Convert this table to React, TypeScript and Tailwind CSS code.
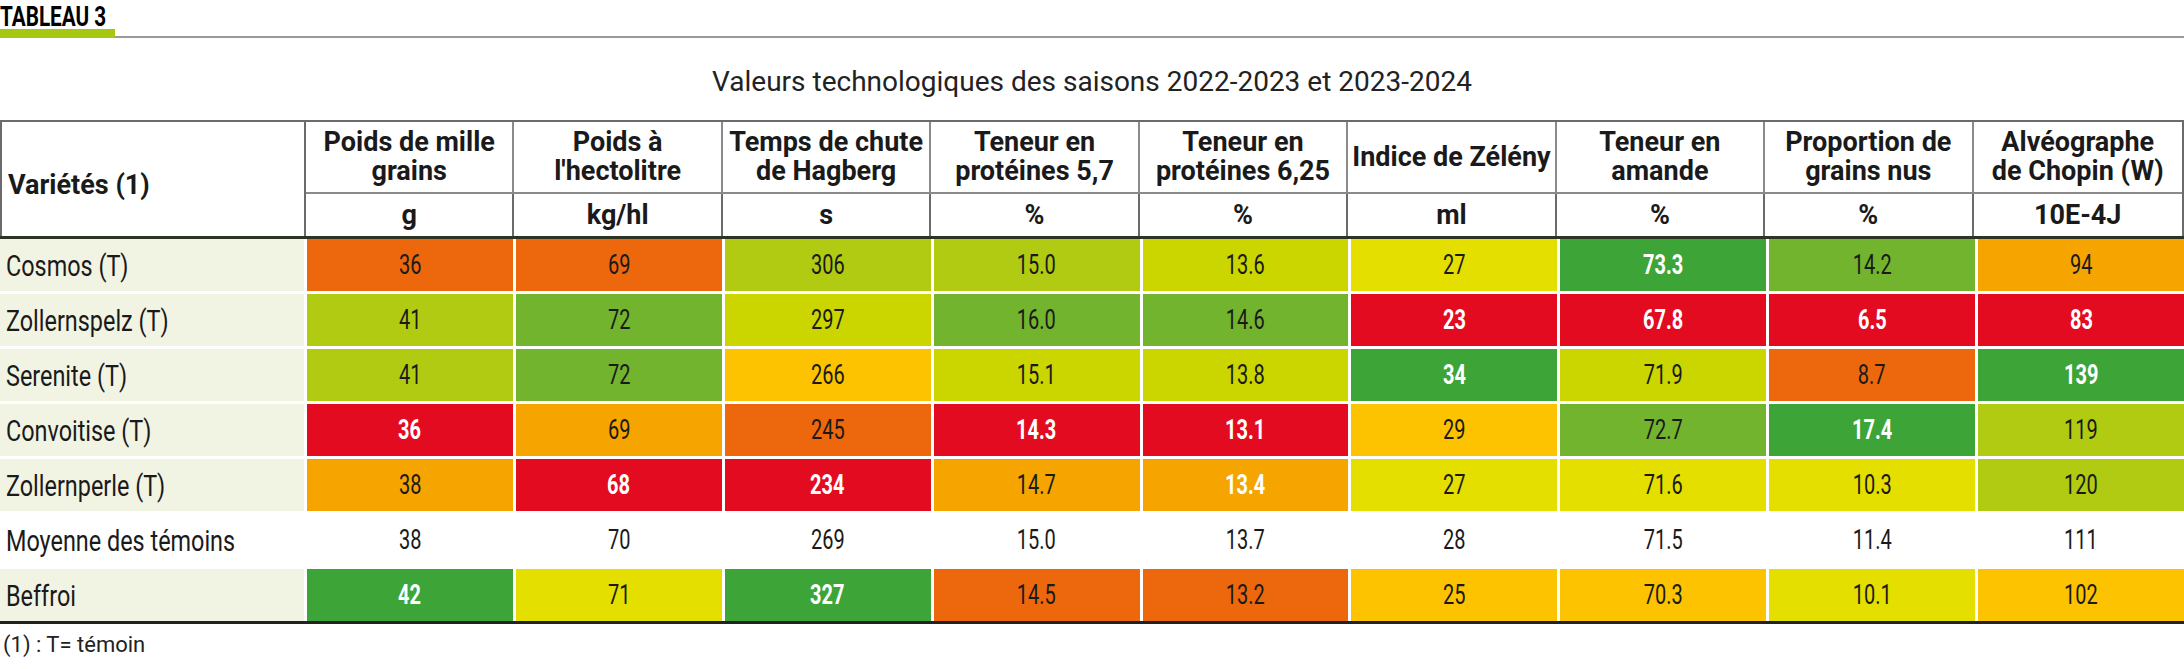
import React from 'react';

type Tone = 'red' | 'orange' | 'amber' | 'gold' | 'yellow' | 'ylime' | 'lime' | 'green' | 'dgreen' | 'none';
type Cell = [string, Tone, boolean?];

const tones: Record<Tone, string> = {
  red: 'bg-[#e30b20]',
  orange: 'bg-[#ed670d]',
  amber: 'bg-[#f5a400]',
  gold: 'bg-[#fdc300]',
  yellow: 'bg-[#e5df00]',
  ylime: 'bg-[#cbd500]',
  lime: 'bg-[#b0cb12]',
  green: 'bg-[#72b42d]',
  dgreen: 'bg-[#3da537]',
  none: 'bg-white',
};

const font = { fontFamily: 'Roboto, "Liberation Sans", sans-serif' };

const columns = [
  ['Poids de mille', 'grains', 'g'],
  ['Poids à', "l'hectolitre", 'kg/hl'],
  ['Temps de chute', 'de Hagberg', 's'],
  ['Teneur en', 'protéines 5,7', '%'],
  ['Teneur en', 'protéines 6,25', '%'],
  ['Indice de Zélény', '', 'ml'],
  ['Teneur en', 'amande', '%'],
  ['Proportion de', 'grains nus', '%'],
  ['Alvéographe', 'de Chopin (W)', '10E-4J'],
];

const rows: { name: string; plain?: boolean; cells: Cell[] }[] = [
  { name: 'Cosmos (T)', cells: [['36', 'orange'], ['69', 'orange'], ['306', 'lime'], ['15.0', 'lime'], ['13.6', 'ylime'], ['27', 'yellow'], ['73.3', 'dgreen', true], ['14.2', 'green'], ['94', 'amber']] },
  { name: 'Zollernspelz (T)', cells: [['41', 'lime'], ['72', 'green'], ['297', 'ylime'], ['16.0', 'green'], ['14.6', 'green'], ['23', 'red', true], ['67.8', 'red', true], ['6.5', 'red', true], ['83', 'red', true]] },
  { name: 'Serenite (T)', cells: [['41', 'lime'], ['72', 'green'], ['266', 'gold'], ['15.1', 'ylime'], ['13.8', 'ylime'], ['34', 'dgreen', true], ['71.9', 'ylime'], ['8.7', 'orange'], ['139', 'dgreen', true]] },
  { name: 'Convoitise (T)', cells: [['36', 'red', true], ['69', 'amber'], ['245', 'orange'], ['14.3', 'red', true], ['13.1', 'red', true], ['29', 'gold'], ['72.7', 'green'], ['17.4', 'dgreen', true], ['119', 'lime']] },
  { name: 'Zollernperle (T)', cells: [['38', 'amber'], ['68', 'red', true], ['234', 'red', true], ['14.7', 'amber'], ['13.4', 'amber', true], ['27', 'yellow'], ['71.6', 'yellow'], ['10.3', 'yellow'], ['120', 'lime']] },
  { name: 'Moyenne des témoins', plain: true, cells: [['38', 'none'], ['70', 'none'], ['269', 'none'], ['15.0', 'none'], ['13.7', 'none'], ['28', 'none'], ['71.5', 'none'], ['11.4', 'none'], ['111', 'none']] },
  { name: 'Beffroi', cells: [['42', 'dgreen', true], ['71', 'yellow'], ['327', 'dgreen', true], ['14.5', 'orange'], ['13.2', 'orange'], ['25', 'gold'], ['70.3', 'gold'], ['10.1', 'yellow'], ['102', 'gold']] },
];

export default function App() {
  return (
    <div className="w-[2184px] h-[669px] bg-white text-[#1a1a1a] overflow-hidden" style={font}>
      {/* heading */}
      <div className="h-[28px]">
        <span className="inline-block origin-left scale-x-[0.74] text-[28px] font-bold leading-[33px] text-black">TABLEAU 3</span>
      </div>
      <div className="flex items-end h-[10px]">
        <div className="w-[115px] h-[9px] bg-[#a7c813]" />
        <div className="flex-1 h-[2px] bg-[#9a9a9a]" />
      </div>

      <div className="h-[82px] pt-[5px] flex items-center justify-center text-[28px] text-[#222]">
        Valeurs technologiques des saisons 2022-2023 et 2023-2024
      </div>

      {/* table */}
      <div className="w-full">
        <div className="grid grid-cols-[304px_repeat(9,minmax(0,1fr))] border-t-2 border-[#6b6b6b] border-l-2 border-r-2">
          <div className="row-span-2 flex items-center pl-[6px] pt-[12px] text-[27px] font-bold border-r-2 border-[#6b6b6b]">
            Variétés (1)
          </div>
          {columns.map((c, i) => (
            <div
              key={'h' + i}
              className={`h-[72px] flex flex-col items-center justify-center text-center text-[27px] font-bold leading-[29px] border-b-2 border-[#8a8a8a] ${i < 8 ? 'border-r-2' : ''}`}
            >
              <span>{c[0]}</span>
              {c[1] && <span>{c[1]}</span>}
            </div>
          ))}
          {columns.map((c, i) => (
            <div
              key={'u' + i}
              className={`h-[42px] flex items-center justify-center text-[27px] font-bold ${i < 8 ? 'border-r-2 border-[#6b6b6b]' : ''}`}
            >
              {c[2]}
            </div>
          ))}
        </div>
        <div className="h-[3px] bg-[#2e3424]" />

        <div className="grid grid-cols-[304px_repeat(9,minmax(0,1fr))] gap-[3px] bg-white">
          {rows.map((r) => (
            <React.Fragment key={r.name}>
              <div className={`h-[52px] flex items-center pl-[6px] ${r.plain ? 'bg-white' : 'bg-[#f2f4e3]'}`}>
                <span className="inline-block origin-left scale-x-[0.78] text-[30px] whitespace-nowrap">{r.name}</span>
              </div>
              {r.cells.map(([v, t, w], j) => (
                <div
                  key={r.name + j}
                  className={`h-[52px] flex items-center justify-center ${tones[t]} ${w ? 'text-white font-bold' : 'text-[#1a1a1a]'}`}
                >
                  <span className="inline-block scale-x-[0.74] text-[27px]">{v}</span>
                </div>
              ))}
            </React.Fragment>
          ))}
        </div>
        <div className="h-[3px] bg-[#222]" />
      </div>

      <div className="pl-[3px] pt-[8px] text-[22px] leading-[26px] text-[#222]">(1) : T= témoin</div>
    </div>
  );
}
